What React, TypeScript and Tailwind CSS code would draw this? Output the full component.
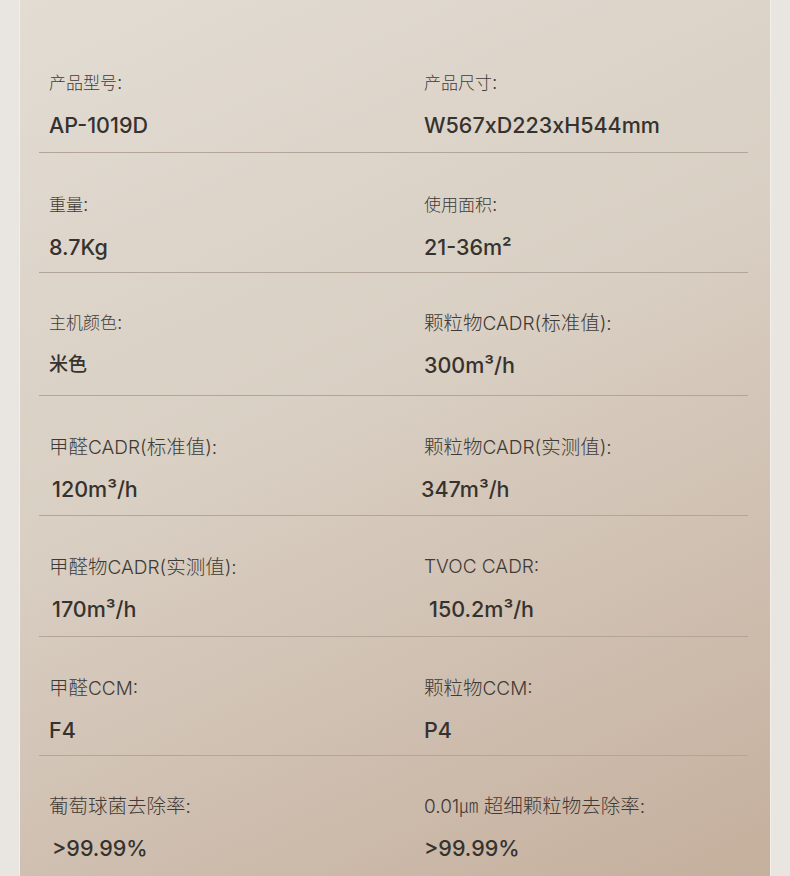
type Item = { label: string; value: string; shift?: string; narrow?: boolean; vsize?: string }

const specs: { left: Item; right: Item; h: string; pt: string }[] = [
  {
    left: { label: '产品型号:', value: 'AP-1019D', narrow: true },
    right: { label: '产品尺寸:', value: 'W567xD223xH544mm', narrow: true },
    h: 'h-[153px]',
    pt: 'pt-[69px]',
  },
  {
    left: { label: '重量:', value: '8.7Kg', narrow: true },
    right: { label: '使用面积:', value: '21-36m²', narrow: true },
    h: 'h-[120px]',
    pt: 'pt-[38px]',
  },
  {
    left: { label: '主机颜色:', value: '米色', narrow: true, vsize: 'text-[19px]' },
    right: { label: '颗粒物CADR(标准值):', value: '300m³/h' },
    h: 'h-[123px]',
    pt: 'pt-[36px]',
  },
  {
    left: { label: '甲醛CADR(标准值):', value: '120m³/h', shift: 'pl-[3px]' },
    right: { label: '颗粒物CADR(实测值):', value: '347m³/h', shift: '-ml-[3px]' },
    h: 'h-[120px]',
    pt: 'pt-[37px]',
  },
  {
    left: { label: '甲醛物CADR(实测值):', value: '170m³/h', shift: 'pl-[3px]' },
    right: { label: 'TVOC CADR:', value: '150.2m³/h', shift: 'pl-[5px]' },
    h: 'h-[121px]',
    pt: 'pt-[37px]',
  },
  {
    left: { label: '甲醛CCM:', value: 'F4' },
    right: { label: '颗粒物CCM:', value: 'P4' },
    h: 'h-[119px]',
    pt: 'pt-[37px]',
  },
]

// CJK runs get their own size, latin runs stay at the label size
function Label({ text, narrow }: { text: string; narrow?: boolean }) {
  const parts = text.split(/([\u4e00-\u9fff]+)/).filter(Boolean)
  return (
    <div className="h-[28px] text-[19px] leading-[28px] font-light text-[#3f3a35] whitespace-nowrap">
      {parts.map((p, i) =>
        /[\u4e00-\u9fff]/.test(p) ? (
          <span key={i} className={narrow ? 'text-[17px]' : 'text-[19.5px]'}>
            {p}
          </span>
        ) : p === '㎛' ? (
          <span key={i} className="text-[13px]">{p}</span>
        ) : (
          <span key={i}>{p}</span>
        )
      )}
    </div>
  )
}

function Cell({ label, value, shift, narrow, vsize }: Item) {
  return (
    <div className="flex flex-col">
      <Label text={label} narrow={narrow} />
      <div
        className={`mt-[13px] h-[30px] leading-[30px] font-medium text-[#36322e] ${vsize ?? 'text-[21.5px]'} ${shift ?? ''}`}
      >
        {value}
      </div>
    </div>
  )
}

export default function App() {
  return (
    <div
      className="w-[790px] h-[876px] flex overflow-hidden bg-[#e9e6e2]"
      style={{ fontFamily: 'Inter, "Noto Sans CJK SC", sans-serif' }}
    >
      {/* side strip */}
      <div className="w-[20px] shrink-0 bg-[#e9e6e2] border-r border-[#f2efeb]" />

      {/* spec panel */}
      <div className="flex-1 bg-[linear-gradient(155deg,#e2dcd3_0%,#d9cfc3_45%,#c5af9d_100%)] pl-[19px] pr-[22px]">
        {specs.map((row, i) => (
          <div
            key={i}
            className={`${row.h} ${row.pt} grid grid-cols-[375px_1fr] content-start pl-[10px] border-b border-[#b3a698]`}
          >
            <Cell {...row.left} />
            <Cell {...row.right} />
          </div>
        ))}
        <div className="grid grid-cols-[375px_1fr] pl-[10px] pt-[36px]">
          <Cell label="葡萄球菌去除率:" value=">99.99%" shift="pl-[3px]" />
          <Cell label="0.01㎛ 超细颗粒物去除率:" value=">99.99%" />
        </div>
      </div>

      <div className="w-[20px] shrink-0 bg-[#e9e6e2] border-l border-[#f2efeb]" />
    </div>
  )
}
